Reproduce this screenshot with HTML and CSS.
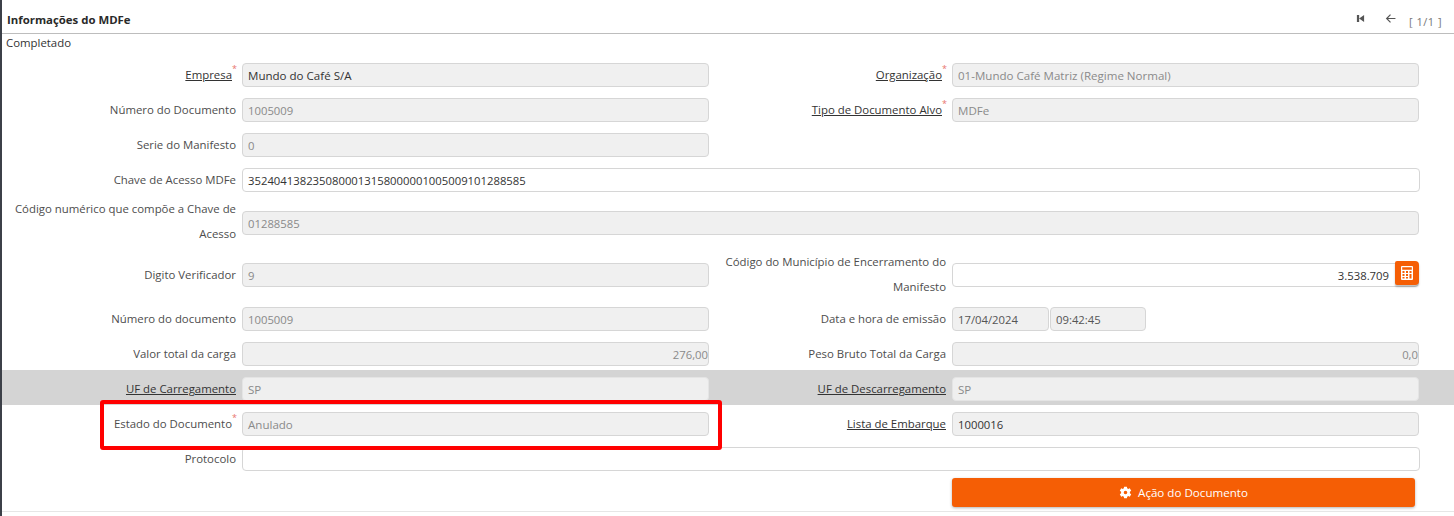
FILE: index.html
```html
<!DOCTYPE html>
<html lang="pt">
<head>
<meta charset="utf-8">
<title>Informações do MDFe</title>
<link rel="stylesheet" href="styles.css">
</head>
<body>
<div class="panel">
  <header class="head">
    <span class="title">Informações do MDFe</span>
    <div class="pager">
      <svg class="ico-first" viewBox="0 0 10 10"><path d="M1 1h2.500v8H1zM9 1v8L3.500 5z"/></svg>
      <svg class="ico-back" viewBox="0 0 10 10"><path d="M9.500 5H1.500M5 1.500 1.500 5 5 8.500"/></svg>
      <span class="count">[ 1/1 ]</span>
    </div>
  </header>
  <div class="status">Completado</div>

  <div class="row">
    <label class="lab link req">Empresa</label><div class="field dark txt">Mundo do Café S/A</div>
    <label class="lab link req">Organização</label><div class="field txt">01-Mundo Café Matriz (Regime Normal)</div>
  </div>
  <div class="row">
    <label class="lab">Número do Documento</label><div class="field">1005009</div>
    <label class="lab link req">Tipo de Documento Alvo</label><div class="field txt">MDFe</div>
  </div>
  <div class="row">
    <label class="lab">Serie do Manifesto</label><div class="field">0</div>
  </div>
  <div class="row">
    <label class="lab">Chave de Acesso MDFe</label><div class="field white wide dark">3524041382350800013158000001005009101288585</div>
  </div>
  <div class="row tall-a">
    <label class="lab two">Código numérico que compõe a Chave de Acesso</label><div class="field wide-ro">01288585</div>
  </div>
  <div class="row tall-b">
    <label class="lab">Digito Verificador</label><div class="field">9</div>
    <label class="lab two">Código do Município de Encerramento do Manifesto</label>
    <div class="combo">
      <div class="field white num dark">3.538.709</div>
      <span class="calc">
        <svg viewBox="0 0 12 14">
          <path fill-rule="evenodd" d="M1 0h10a1 1 0 0 1 1 1v12a1 1 0 0 1-1 1H1a1 1 0 0 1-1-1V1a1 1 0 0 1 1-1zm.200 1.200v2.600h9.600V1.200z"/>
          <path class="cells" d="M1.500 5h2v2h-2zM5 5h2v2H5zM8.500 5h2v2h-2zM1.500 8h2v2h-2zM5 8h2v2H5zM1.500 11h2v1.500h-2zM5 11h2v1.500H5zM8.500 8h2v4.500h-2z"/>
        </svg>
      </span>
    </div>
  </div>
  <div class="row">
    <label class="lab">Número do documento</label><div class="field">1005009</div>
    <label class="lab">Data e hora de emissão</label>
    <div class="dates"><div class="field date">17/04/2024</div><div class="field time">09:42:45</div></div>
  </div>
  <div class="row">
    <label class="lab">Valor total da carga</label><div class="field num">276,00</div>
    <label class="lab">Peso Bruto Total da Carga</label><div class="field num">0,0</div>
  </div>
  <div class="row shade">
    <label class="lab link">UF de Carregamento</label><div class="field flat txt">SP</div>
    <label class="lab link">UF de Descarregamento</label><div class="field flat txt">SP</div>
  </div>
  <div class="row">
    <label class="lab req">Estado do Documento</label><div class="field txt">Anulado</div>
    <label class="lab link">Lista de Embarque</label><div class="field dark">1000016</div>
  </div>
  <div class="row">
    <label class="lab">Protocolo</label><div class="field white wide"></div>
  </div>
  <div class="actions">
    <button class="action" type="button">
      <svg viewBox="0 0 16 16"><path fill-rule="evenodd" d="M6.300 .8h3.400l.4 2.100 1.200.7 2-.7 1.700 2.900-1.600 1.400v1.600l1.600 1.400-1.700 2.900-2-.7-1.200.7-.4 2.100H6.300l-.4-2.100-1.200-.7-2 .7L1 10.200l1.600-1.400V7.200L1 5.800l1.700-2.900 2 .7 1.200-.7zM8 5.800a2.200 2.200 0 1 0 0 4.400 2.200 2.200 0 0 0 0-4.400z"/></svg>
      Ação do Documento
    </button>
  </div>
  <div class="next">Informações de Preço</div>
  <div class="mark"></div>
</div>
</body>
</html>
```
FILE: styles.css
```css
* { box-sizing: border-box; }
html, body { margin: 0; height: 100%; overflow: hidden; background: #fff; }
body { font: 11.4px/16px "Open Sans", "Noto Sans", sans-serif; color: #4d4d4d; }
.panel { position: relative; height: 516px; border-left: 2px solid #3c4048; overflow: hidden; }
.head { display: flex; justify-content: space-between; height: 34px; border-bottom: 1px solid #bdbdbd; padding: 12px 12px 0 5px; }
.title { font-weight: 700; color: #2a2a2a; }
.pager { display: flex; align-items: flex-start; color: #666; font-size: 11px; }
.ico-first { width: 9px; height: 9px; margin: 2px 0 0; fill: #555; }
.ico-back { width: 11px; height: 11px; margin: 1px 0 0 20px; fill: none; stroke: #555; stroke-width: 1.100; }
.count { margin: 2px 0 0 13px; letter-spacing: .5px; white-space: nowrap; color: #777; }
.status { height: 22px; padding: 1px 0 0 4px; color: #333; }
.row { display: grid; grid-template-columns: 234px 467px 231px 467px; column-gap: 6px; height: 35px; padding-top: 7px; align-items: start; }
.lab { justify-self: end; text-align: right; line-height: 24px; color: #4d4d4d; white-space: nowrap; position: relative; }
.link { color: #333; text-decoration: underline; }
.req { margin-right: 4px; }
.req::after { content: "*"; position: absolute; top: -6px; right: -5px; color: #e8746d; font-size: 9px; text-decoration: none; }
.field { height: 24px; background: #f0f0f0; border: 1px solid #d6d6d6; border-radius: 4px; padding: 0 5px; line-height: 23px; color: #8a8a8a; white-space: nowrap; font-size: 11.300px; }
.txt { font-size: 11.550px; }
.dark { color: #333; }
.white { background: #fff; }
.wide { grid-column: 2 / 5; width: 1178px; }
.wide-ro { grid-column: 2 / 5; width: 1177px; margin-top: 13px; }
.num { text-align: right; padding-right: 0; }
.flat { background: #efefef; border-color: #e4e4e4; }
.shade { background: #d4d4d4; }
.tall-a { height: 54px; padding-top: 1px; }
.tall-a .wide-ro { margin-top: 14px; }
.tall-b { height: 50px; padding-top: 0; }
.two { white-space: normal; width: 100%; line-height: 24.500px; }
.tall-b .field { margin-top: 13px; }
.tall-b > .lab:first-child { margin-top: 13px; }
.combo { display: flex; width: 467px; }
.combo .field { flex: 1; padding-right: 29px; margin-right: 0; }
.calc { flex: none; width: 24px; height: 24px; margin: 11px 0 0 -24px; background: #f55e05; border-radius: 2px 4px 4px 2px; box-shadow: 0 2px 2px rgba(0,0,0,.25); display: flex; align-items: center; justify-content: center; position: relative; }
.calc svg { width: 12px; height: 14px; fill: #fff; }
.calc svg .cells { fill: #f55e05; }
.dates { display: flex; gap: 1px; }
.date, .time { color: #555; }
.date { width: 97px; }
.time { width: 96px; }
.actions { padding: 3px 0 0 950px; height: 36px; }
.action { width: 463px; height: 29px; border: 0; border-radius: 3px; background: #f55e05; color: #fff; font: 11.600px "Open Sans", "Noto Sans", sans-serif; display: flex; align-items: center; justify-content: center; gap: 6px; box-shadow: 0 1px 3px rgba(0,0,0,.3); padding: 0; }
.action svg { width: 13px; height: 13px; fill: #fff; }
.next { border-top: 1px solid #e6e6e6; padding: 1px 0 0 25px; color: #333; }
.mark { position: absolute; left: 98px; top: 400px; width: 622px; height: 50px; border: 4px solid #f00; border-radius: 3px; }
```
